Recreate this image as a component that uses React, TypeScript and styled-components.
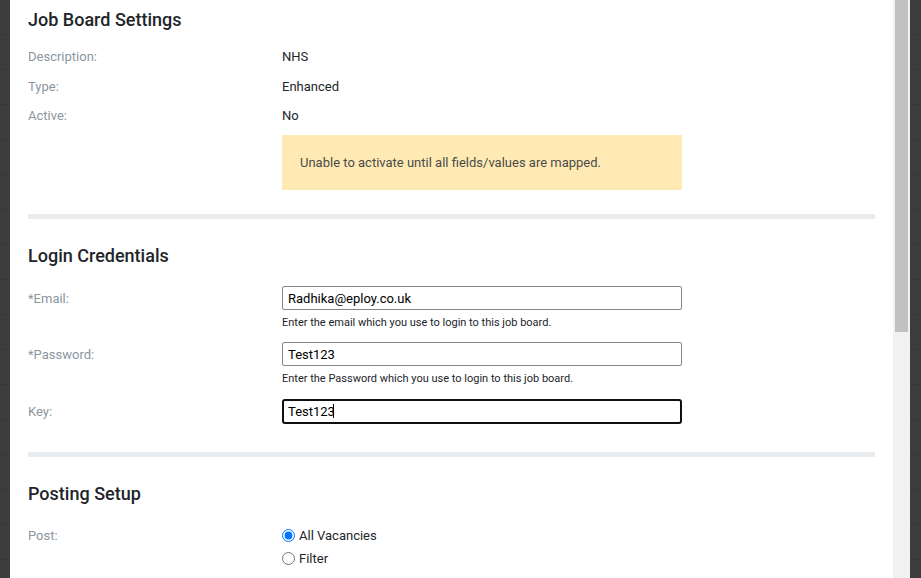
import React from "react";
import styled, { createGlobalStyle } from "styled-components";

const Global = createGlobalStyle`
  html, body { margin: 0; padding: 0; }
  body {
    background: #3d3d3d;
    font-family: Roboto, "Liberation Sans", Arial, sans-serif;
  }
`;

const Screen = styled.div`
  display: flex;
  width: 921px;
  height: 578px;
  overflow: hidden;
  background-color: #3d3d3d;
  background-image: repeating-linear-gradient(
    to bottom,
    transparent 0 34px,
    #373737 34px 35px
  );
`;

const Gutter = styled.div<{ $w: number }>`
  flex: 0 0 ${(p) => p.$w}px;
`;

const Modal = styled.div`
  flex: 0 0 900px;
  display: flex;
  background: #ffffff;
`;

const Content = styled.div`
  flex: 1;
  min-width: 0;
  padding: 0 18px;
`;

const Track = styled.div`
  flex: 0 0 17px;
  background: #f1f1f1;
  display: flex;
  justify-content: center;
`;

const Thumb = styled.div`
  width: 13px;
  height: 332px;
  background: #c1c1c1;
`;

const Section = styled.section<{ $first?: boolean; $bottom?: number }>`
  padding-top: ${(p) => (p.$first ? 0 : 17)}px;
  padding-bottom: ${(p) => p.$bottom ?? 18}px;
`;

const Title = styled.h2`
  margin: 0;
  font-size: 18px;
  font-weight: 500;
  line-height: 40px;
  color: #212529;
`;

const Divider = styled.hr`
  border: 0;
  margin: 0;
  height: 5px;
  background: #e9ecef;
`;

const DetailList = styled.div`
  margin-top: 2px;
`;

const Row = styled.div<{ $lh: number }>`
  display: grid;
  grid-template-columns: 254px 400px;
  font-size: 13px;
  line-height: ${(p) => p.$lh}px;
`;

const Label = styled.div`
  color: #8b96a0;
`;

const Value = styled.div`
  color: #212529;
`;

const Alert = styled.div`
  margin: 4.5px 0 6px 254px;
  width: 400px;
  height: 55px;
  box-sizing: border-box;
  padding: 0 18px;
  display: flex;
  align-items: center;
  background: #ffeab4;
  color: #4a4a4a;
  font-size: 13px;
`;

const Fields = styled.div`
  margin-top: 10px;
`;

const Field = styled.div`
  margin-bottom: 10px;
`;

const FieldLabel = styled(Label)<{ $shift?: number }>`
  line-height: 24px;
  padding-top: ${(p) => p.$shift ?? 1}px;
`;

const InputWrap = styled.div`
  position: relative;
  width: 400px;
`;

const TextInput = styled.input<{ $focused?: boolean }>`
  display: block;
  box-sizing: border-box;
  width: 400px;
  height: ${(p) => (p.$focused ? 25 : 24)}px;
  margin-top: ${(p) => (p.$focused ? 1 : 0)}px;
  padding: 0 ${(p) => (p.$focused ? 4 : 5)}px;
  border: ${(p) => (p.$focused ? "2px solid #101010" : "1px solid #858585")};
  border-radius: ${(p) => (p.$focused ? 3 : 2)}px;
  font-family: Roboto, "Liberation Sans", Arial, sans-serif;
  font-size: 13px;
  color: #000;
  background: #fff;
  outline: none;
`;

const Caret = styled.span`
  position: absolute;
  left: 51px;
  top: 6px;
  width: 1px;
  height: 14px;
  background: #000;
`;

const Help = styled.div`
  margin-top: 3px;
  font-size: 11px;
  line-height: 19px;
  color: #212529;
`;

const RadioGroup = styled.div`
  display: flex;
  flex-direction: column;
`;

const RadioOption = styled.label`
  display: flex;
  align-items: center;
  height: 23px;
  font-size: 13px;
  color: #212529;
`;

const Radio = styled.input`
  width: 13px;
  height: 13px;
  margin: 0 4px 0 0;
  accent-color: #0075ff;
`;

const details = [
  { label: "Description:", value: "NHS" },
  { label: "Type:", value: "Enhanced" },
  { label: "Active:", value: "No" },
];

export default function App() {
  return (
    <>
      <Global />
      <Screen>
        <Gutter $w={10} />
        <Modal>
          <Content>
            <Section $first>
              <Title>Job Board Settings</Title>
              <DetailList>
                {details.map((d) => (
                  <Row key={d.label} $lh={29.5}>
                    <Label>{d.label}</Label>
                    <Value>{d.value}</Value>
                  </Row>
                ))}
              </DetailList>
              <Alert>Unable to activate until all fields/values are mapped.</Alert>
            </Section>
            <Divider />
            <Section>
              <Title>Login Credentials</Title>
              <Fields>
                <Field>
                  <Row $lh={24}>
                    <FieldLabel>*Email:</FieldLabel>
                    <div>
                      <TextInput readOnly value="Radhika@eploy.co.uk" />
                      <Help>Enter the email which you use to login to this job board.</Help>
                    </div>
                  </Row>
                </Field>
                <Field>
                  <Row $lh={24}>
                    <FieldLabel>*Password:</FieldLabel>
                    <div>
                      <TextInput readOnly value="Test123" />
                      <Help>Enter the Password which you use to login to this job board.</Help>
                    </div>
                  </Row>
                </Field>
                <Field>
                  <Row $lh={24}>
                    <FieldLabel $shift={2}>Key:</FieldLabel>
                    <InputWrap>
                      <TextInput readOnly $focused value="Test123" />
                      <Caret />
                    </InputWrap>
                  </Row>
                </Field>
              </Fields>
            </Section>
            <Divider />
            <Section>
              <Title>Posting Setup</Title>
              <Fields>
                <Row $lh={23}>
                  <Label>Post:</Label>
                  <RadioGroup>
                    <RadioOption>
                      <Radio type="radio" name="post" defaultChecked />
                      All Vacancies
                    </RadioOption>
                    <RadioOption>
                      <Radio type="radio" name="post" />
                      Filter
                    </RadioOption>
                  </RadioGroup>
                </Row>
              </Fields>
            </Section>
          </Content>
          <Track>
            <Thumb />
          </Track>
        </Modal>
        <Gutter $w={11} />
      </Screen>
    </>
  );
}
